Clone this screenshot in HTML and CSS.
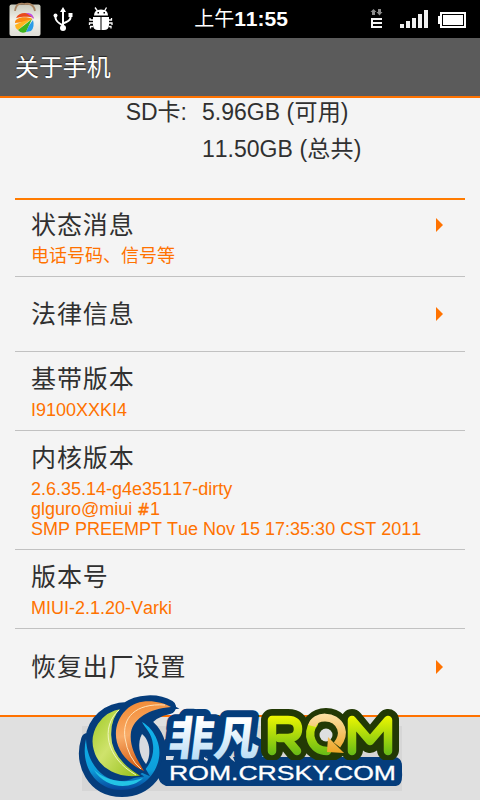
FILE: index.html
```html
<!DOCTYPE html>
<html lang="zh-CN">
<head>
<meta charset="utf-8">
<title>关于手机</title>
<link rel="stylesheet" href="styles.css">
</head>
<body>
<div class="phone">
  <div class="status">
    <svg class="status-left" width="120" height="38" viewBox="0 0 120 38">
      <defs>
        <linearGradient id="bag" x1="0" y1="0" x2="0" y2="1"><stop offset="0" stop-color="#c9cabd"/><stop offset=".5" stop-color="#f3f2ec"/><stop offset="1" stop-color="#deddd6"/></linearGradient>
      </defs>
      <rect x="9.500" y="4.500" width="31" height="31.500" rx="2" fill="url(#bag)"/>
      <path d="M15 11C16 3 21 3 25 4C30 3 34 5 35 11" fill="none" stroke="#a98562" stroke-width="1.800"/>
      <path d="M16 18C19 12 29 11 34 18C28 16 21 17 16 18Z" fill="#ea4a1c"/>
      <path d="M15 23C14 18 24 15 33 19L24 22Z" fill="#fb8c12"/>
      <path d="M15 25Q22 21 32 19Q23 25 18 30Q15 28 15 25Z" fill="#ffb51f"/>
      <path d="M18 30Q26 24 32 19Q29 25 26 32Q21 34 18 30Z" fill="#3fb51d"/>
      <path d="M26 32Q28 26 33 20Q35 27 31 31Z" fill="#2a9ce8"/>
      <path d="M26 13Q33 12 34 19Q31 16 26 13Z" fill="#bd52df"/>
      <path d="M63 10V28M55.500 15V18Q56 22 63 25.500M70.500 15V18Q70 21 63 23.500" fill="none" stroke="#fff" stroke-width="2"/>
      <path d="M60 12L63 7L66 12Z" fill="#fff"/><circle cx="63" cy="28" r="3" fill="#fff"/><circle cx="55.500" cy="15.500" r="2" fill="#fff"/><rect x="68.500" y="13" width="4" height="4" fill="#fff"/>
      <path d="M94 15.500Q94 9.500 101 9.500T108 15.500ZM93 17H100.500V30H98Q93 30 93 25ZM101.500 17H109V25Q109 30 104 30H101.500Z" fill="#fff"/>
      <path d="M95 7.500L97.500 11M106.500 7.500L104.500 11M93 20H90V18M93 23H89.500V25M93 26.500H90.500V28.500M109 20H111.500V18M109 23H112V25M109 26.500H111V28.500" fill="none" stroke="#fff" stroke-width="1.300"/>
      <path d="M97.500 12h1.500v1.500h-1.500zM103.500 12h1.500v1.500h-1.500z" fill="#000"/>
    </svg>
    <div class="clock"><span>上午</span><b>11:55</b></div>
    <svg class="status-right" width="110" height="38" viewBox="370 0 110 38">
      <path d="M373.500 9L376.500 12H375V15H372V12H370.500ZM378 9H381V12H382.500L379.500 15.500L376.500 12H378Z" fill="#8b8b8b"/>
      <path d="M371 18H382V20H373V22H382V24H373V26H382V28H371Z" fill="#f4f4f4"/>
      <path d="M400 24h4v4h-4zM406 21h4v7h-4zM412 18h4v10h-4zM418 14h4v14h-4zM424 10h4v18h-4z" fill="#f0f0f0"/>
      <path d="M440 12H466V28H440V24H438V16H440Z" fill="#fff"/>
      <rect x="442.500" y="14.500" width="21" height="11" fill="#fff" stroke="#000"/>
    </svg>
  </div>
  <header class="bar">关于手机</header>
  <main class="content">
    <div class="storage">
      <span class="label">SD卡:</span><span>5.96GB<i> (可用)</i></span>
      <span></span><span>11.50GB<i> (总共)</i></span>
    </div>
    <ul class="list">
      <li class="row first"><div><h2>状态消息</h2><p>电话号码、信号等</p></div><i class="arrow"></i></li>
      <li class="row single"><h2>法律信息</h2><i class="arrow"></i></li>
      <li class="row"><div><h2>基带版本</h2><p>I9100XXKI4</p></div></li>
      <li class="row"><div><h2>内核版本</h2><p>2.6.35.14-g4e35117-dirty<br>glguro@miui <span class="hash">#</span>1<br>SMP PREEMPT Tue Nov 15 17:35:30 CST 2011</p></div></li>
      <li class="row"><div><h2>版本号</h2><p>MIUI-2.1.20-Varki</p></div></li>
      <li class="row single last"><h2>恢复出厂设置</h2><i class="arrow"></i></li>
    </ul>
  </main>
  <footer class="footer"><div class="button"></div></footer>
  <svg class="logo" width="340" height="110" viewBox="70 690 340 110">
    <defs>
      <linearGradient id="lime" x1="0" y1="0" x2="1" y2="1"><stop offset="0" stop-color="#9cc820"/><stop offset=".45" stop-color="#cfe36c"/><stop offset="1" stop-color="#91bd13"/></linearGradient>
      <linearGradient id="orange" x1=".3" y1="0" x2=".5" y2="1"><stop offset="0" stop-color="#f28a34"/><stop offset=".45" stop-color="#f9ac68"/><stop offset="1" stop-color="#cf5208"/></linearGradient>
      <linearGradient id="blue" x1="0" y1="0" x2="0" y2="1"><stop offset="0" stop-color="#12b5ec"/><stop offset=".7" stop-color="#0d9edb"/><stop offset="1" stop-color="#07459b"/></linearGradient>
      <linearGradient id="ice" x1="0" y1="0" x2="0" y2="1"><stop offset=".3" stop-color="#fff"/><stop offset=".9" stop-color="#b5dbf5"/></linearGradient>
      <linearGradient id="green" gradientUnits="userSpaceOnUse" x1="0" y1="714" x2="0" y2="756"><stop offset="0" stop-color="#f4fa00"/><stop offset="1" stop-color="#62b817"/></linearGradient>
      <linearGradient id="gold" gradientUnits="userSpaceOnUse" x1="0" y1="714" x2="0" y2="754"><stop offset="0" stop-color="#fbe0a4"/><stop offset="1" stop-color="#eda321"/></linearGradient>
    </defs>
    <path d="M88 740C81 763 93 790 122 790C147 790 163 768 159 747C157 736 151 728 143 723C149 714 158 709 169 707C157 700 138 701 127 709C108 709 94 722 92 740Z" fill="#053d7c" stroke="#053d7c" stroke-width="14" stroke-linejoin="round"/>
    <path d="M86 739C80 765 95 790 121 790C149 790 166 762 157 740C154 732 149 726 142 722C145 728 152 733 153 745C155 763 141 780 122 781C101 781 87 762 86 739Z" fill="url(#blue)"/>
    <path d="M94 770C103 778 120 786 143 778C130 791 105 788 94 770Z" fill="#23c4e5"/>
    <path d="M122 708C100 711 88 732 93 750C98 770 119 780 142 776C123 765 111 751 112 733C112 722 115 715 122 708Z" fill="url(#lime)" stroke="#053d7c" stroke-width="1.500"/>
    <path d="M119 710C100 727 106 758 136 775" fill="none" stroke="#f0f6bd"/>
    <path d="M171 707C158 700 138 698 126 710C108 728 114 758 144 771C137 759 129 747 131 732C134 718 149 709 171 707Z" fill="url(#orange)" stroke="#053d7c" stroke-width="5" paint-order="stroke"/>
    <path d="M165 705C135 703 122 718 125 738Q128 758 141 769" fill="none" stroke="#ffe2b7"/>
    <path d="M142 734C151 741 151 757 146 764C139 756 137 743 142 734Z" fill="#d9dbe0"/>
    <path d="M163 757H395Q402 758 402 766V772Q403 786 396 786H166Q157 783 158 772Z" fill="#053d7c"/>
    <text class="brand" transform="translate(168 755) skewX(-7)" x="-1" y="0" textLength="91" lengthAdjust="spacingAndGlyphs">非凡</text>
    <path d="M166 756H174L173 760H166ZM204 757l4 2-1 2-3-2ZM229 756l4 1 2 5-4-3Z" fill="#d7dce2"/>
    <g fill="none" stroke="#223905" stroke-width="22" stroke-linecap="round" stroke-linejoin="round">
      <path d="M272 750V720H288Q298 720 298 729Q298 738 288 738H279M287 739L296 750"/>
      <circle cx="326" cy="735" r="16"/>
      <path d="M352 750V720L370 742L388 720V750"/>
    </g>
    <path d="M260 760H399V770H260Z" fill="#053d7c"/>
    <circle cx="326" cy="735" r="6.500" fill="#dedfe1"/>
    <g fill="none" stroke="url(#green)" stroke-width="8.500" stroke-linecap="round" stroke-linejoin="round">
      <path d="M272 751V720H288Q298 720 298 729Q298 738 288 738H279M287 739L297 751"/>
      <path d="M314 723C306 733 311 751 327 751"/>
      <path d="M352 751V720L370 741L388 720V751"/>
    </g>
    <path d="M312 726C315 715 335 714 341 728Q344 736 337 745" fill="none" stroke="url(#gold)" stroke-width="8"/>
    <path d="M328 737L344 753L327 752Z" fill="url(#gold)"/>
    <text class="site" x="169" y="780" textLength="227" lengthAdjust="spacingAndGlyphs">ROM.CRSKY.COM</text>
  </svg>
</div>
</body>
</html>
```

FILE: styles.css
```css
* { box-sizing: border-box; margin: 0; padding: 0; }
body {
  font-family: "Liberation Sans", "Noto Sans CJK SC", sans-serif;
  font-kerning: none;
  background: #f4f4f4;
  overflow: hidden;
}
.phone {
  position: relative;
  width: 480px;
  height: 800px;
  display: flex;
  flex-direction: column;
  color: #303030;
}
.status {
  height: 38px;
  background: #000;
  color: #fff;
  display: grid;
  grid-template-columns: 1fr auto 1fr;
}
.status-right { justify-self: end; }
.clock { display: flex; align-items: center; font-size: 20px; line-height: 38px; padding-left: 2px; }
.clock b { font-size: 21px; }
.bar {
  height: 60px;
  padding: 1px 0 0 15px;
  background: #5b5b5b;
  border-bottom: 2px solid #ff7200;
  color: #fff;
  font-size: 24px;
  letter-spacing: -.1px;
  line-height: 58px;
  text-shadow: 0 -1px 1px #222;
}
.content { height: 617px; }
.storage {
  display: grid;
  grid-template-columns: 187px 1fr;
  grid-auto-rows: 37px;
  column-gap: 15px;
  height: 100px;
  font-size: 23px;
  line-height: 29px;
}
.storage i { font-style: normal; letter-spacing: .2px; }
.label { text-align: right; }
.list { list-style: none; margin: 0 15px; border-top: 2px solid #ff7b00; }
.row {
  display: flex;
  justify-content: space-between;
  align-items: flex-start;
  padding: 12px 22px 10px 16px;
  border-bottom: 1px solid #c1c1c1;
}
.row.first { padding-top: 10px; }
.row.single { height: 75px; align-items: center; padding-top: 0; padding-bottom: 0; }
.row.last { border: 0; }
.row h2 { font-size: 25px; font-weight: 400; line-height: 30px; letter-spacing: .9px; }
.row p { margin-top: 6px; font-size: 18px; line-height: 20px; color: #ff7200; white-space: nowrap; }
.hash { font-family: "DejaVu Sans", sans-serif; font-size: 15px; line-height: 1; -webkit-text-stroke: .4px #ff7200; }
.arrow { width: 0; height: 0; border: 7px solid transparent; border-left-color: #ff7200; border-right: 0; }
.first .arrow { margin-top: 8px; }
.footer {
  height: 85px;
  background: #e0e0e0;
  border-top: 2px solid #ff7200;
  padding: 9px 78px 0 82px;
}
.button { height: 65px; background: #d6d6d6; }
.logo { position: absolute; left: 70px; top: 690px; }
.brand { font: 900 46px "Noto Sans CJK SC", sans-serif; fill: url(#ice); stroke: #053d7c; stroke-width: 14px; stroke-linejoin: round; paint-order: stroke; }
.site { font: 400 20px "Liberation Sans", sans-serif; fill: #fff; stroke: #fff; stroke-width: .3px; }
```
